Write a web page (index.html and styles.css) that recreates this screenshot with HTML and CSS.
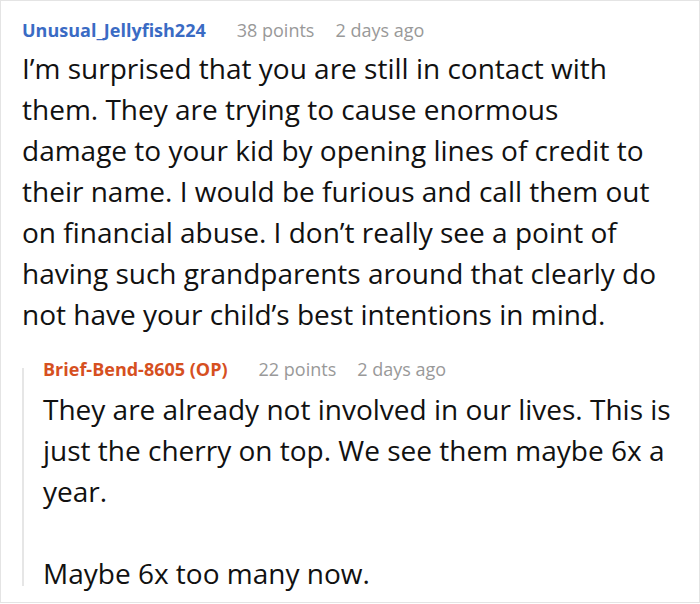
FILE: index.html
```html
<!DOCTYPE html>
<html>
<head>
<meta charset="utf-8">
<link rel="stylesheet" href="styles.css">
</head>
<body>
<div class="frame">
  <div class="comment">
    <div class="meta">
      <span class="user">Unusual_Jellyfish224</span>
      <span class="info">38 points</span>
      <span class="info">2 days ago</span>
    </div>
    <p class="text">I’m surprised that you are still in contact with<br>them. They are trying to cause enormous<br>damage to your kid by opening lines of credit to<br>their name. I would be furious and call them out<br>on financial abuse. I don’t really see a point of<br>having such grandparents around that clearly do<br>not have your child’s best intentions in mind.</p>
    <div class="reply">
      <div class="meta">
        <span class="user op">Brief-Bend-8605 (OP)</span>
        <span class="info">22 points</span>
        <span class="info">2 days ago</span>
      </div>
      <p class="text">They are already not involved in our lives. This is<br>just the cherry on top. We see them maybe 6x a<br>year.</p>
      <p class="text gap">Maybe 6x too many now.</p>
    </div>
  </div>
</div>
</body>
</html>
```

FILE: styles.css
```css
html, body {
  margin: 0;
  padding: 0;
  background: #ffffff;
}
.frame {
  box-sizing: border-box;
  width: 700px;
  height: 603px;
  border: 1px solid #e4e4e4;
  overflow: hidden;
  font-family: "Open Sans", "Noto Sans", sans-serif;
}
.comment {
  padding: 16px 0 0 21px;
}
.meta {
  display: flex;
  align-items: baseline;
  gap: 21px;
  font-size: 18px;
  line-height: 26px;
}
.user {
  font-weight: 700;
  color: #3a6bc4;
  margin-right: 10px;
}
.user.op {
  color: #d6501f;
}
.info {
  color: #999999;
}
.text {
  margin: 0;
  font-size: 28px;
  line-height: 41px;
  color: #111111;
  white-space: nowrap;
}
.comment > .text {
  margin-top: 5px;
}
.reply {
  position: relative;
  margin-top: 21px;
  padding-left: 21px;
}
.reply::before {
  content: "";
  position: absolute;
  left: 0;
  top: 12px;
  bottom: 8px;
  width: 2px;
  background: #e6e6e6;
}
.reply .meta + .text {
  margin-top: 7px;
}
.text.gap {
  margin-top: 41px;
}
```
